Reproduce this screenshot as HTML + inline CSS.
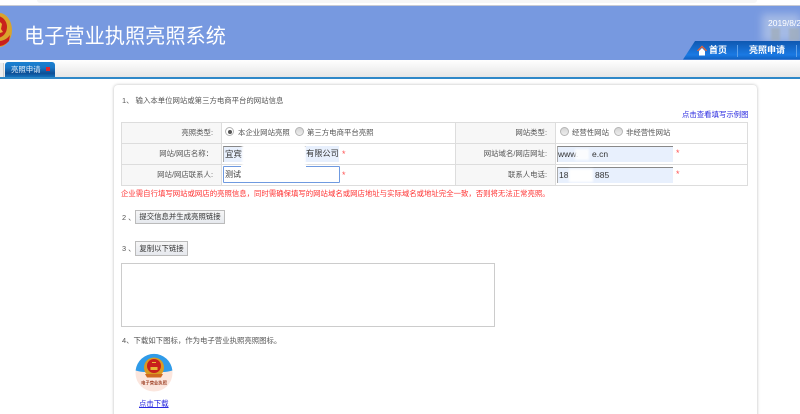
<!DOCTYPE html>
<html lang="zh"><head><meta charset="utf-8"><title>电子营业执照亮照系统</title>
<style>
html,body{margin:0;padding:0;background:#fff;width:800px;height:414px;overflow:hidden}
body{font-family:"Liberation Sans","Noto Sans CJK SC",sans-serif;position:relative;color:#555}
.a{position:absolute;white-space:nowrap}
.t{font-size:7.4px;line-height:12px;filter:blur(.3px)}
.r{text-align:right}
.l{background:#ddd;position:absolute}
.radio{position:absolute;width:7px;height:7px;border-radius:50%;border:1px solid #b5b5b5;background:linear-gradient(#d5d5d5,#eee)}
.radio.on{background:#fff}
.radio.on:after{content:"";position:absolute;left:1.5px;top:1.5px;width:4px;height:4px;border-radius:50%;background:#555}
.inp{position:absolute;box-sizing:border-box;background:#e8f0fd;border-top:1px solid #888;border-left:1px solid #aaa;font-size:8.5px;line-height:15px;color:#333;padding-left:1px;overflow:hidden;white-space:nowrap;filter:blur(.2px)}
.star{position:absolute;color:#f55;font-size:9px;line-height:10px}
.btn{position:absolute;box-sizing:border-box;background:linear-gradient(#f6f6f6,#e6e9ee);border:1px solid #bbb;font-size:7.4px;line-height:12px;text-align:center;color:#333;white-space:nowrap}
.mask{position:absolute;background:#fff;filter:blur(1px)}
</style></head><body>
<div class="a" style="left:37px;top:0;width:720px;height:3px;background:#f6f6f6;border-radius:0 0 4px 4px"></div>
<div class="a" style="left:0;top:5px;width:800px;height:1px;background:#c8cbd4"></div>
<div class="a" style="left:0;top:6px;width:800px;height:54px;background:#7799e0"></div>
<div class="a" style="left:762px;top:14px;width:38px;height:28px;background:#b8c8e8;filter:blur(4px);opacity:.7"></div>
<div class="a" style="left:771px;top:28px;width:9px;height:13px;background:#a0adba;filter:blur(1px);opacity:.75"></div>
<div class="a" style="left:789px;top:28px;width:11px;height:13px;background:#a0adba;filter:blur(1px);opacity:.75"></div>
<svg class="a" style="left:0;top:13px" width="14" height="36" viewBox="0 0 14 36"><ellipse cx="-1" cy="17" rx="13" ry="17" fill="#d9a32c"/><ellipse cx="-3" cy="14" rx="10" ry="11" fill="#c9201c"/><path d="M0 9l2 2-1 5 2 3-3 1z" fill="#e8b838"/><path d="M-1 28c5 0 9-3 11-6l-1 6c-3 3-6 5-10 5z" fill="#c9201c"/></svg>
<div class="a" style="left:24px;top:22px;font-size:20.2px;line-height:30px;color:#fff;filter:blur(.3px)">电子营业执照亮照系统</div>
<div class="a" style="left:768px;top:18px;font-size:8.5px;line-height:11px;color:#fff">2019/8/2</div>
<svg class="a" style="left:682px;top:40px" width="118" height="20"><defs><linearGradient id="g" x1="0" y1="0" x2="0" y2="1"><stop offset="0" stop-color="#0f58b0"/><stop offset=".75" stop-color="#1a7ae4"/><stop offset="1" stop-color="#0f60c0"/></linearGradient></defs><path d="M1 19.500L13 1H118V19.500Z" fill="url(#g)"/><rect x="55" y="5" width="1" height="12" fill="#5fa0e8"/><rect x="114" y="5" width="1" height="12" fill="#5fa0e8"/><path d="M15 10.500l5-5 5 5-1 .8-4-4-4 4z" fill="#f0602a"/><path d="M17 11l3-3 3 3v4.500h-6z" fill="#fff"/></svg>
<div class="a" style="left:709px;top:44px;font-size:9px;line-height:13px;font-weight:bold;color:#fff">首页</div>
<div class="a" style="left:749px;top:44px;font-size:9px;line-height:13px;font-weight:bold;color:#fff">亮照申请</div>
<div class="a" style="left:0;top:60px;width:800px;height:17px;background:linear-gradient(#fff,#e6e6e6)"></div>
<div class="a" style="left:0;top:63px;width:3px;height:14px;background:#eee;border-right:1px solid #ccc"></div>
<div class="a" style="left:5px;top:62px;width:50px;height:15px;background:linear-gradient(#1a80d0 0,#1a78c8 35%,#0d4f96 75%,#1470bc 100%);border-radius:3px 3px 0 0"></div>
<div class="a" style="left:11px;top:64px;font-size:7.4px;line-height:12px;color:#e6f0fa;filter:blur(.2px)">亮照申请</div>
<div class="a" style="left:46px;top:67px;width:4px;height:4px;background:#e3242b"></div>
<div class="a" style="left:0;top:77px;width:800px;height:2px;background:#2f88c8"></div>
<div class="a" style="left:114px;top:85px;width:643px;height:340px;background:#fff;border-radius:4px 4px 0 0;box-shadow:0 0 3px #bbb"></div>
<div class="a t" style="left:122px;top:95px">1、 输入本单位网站或第三方电商平台的网站信息</div>
<div class="a t" style="left:682px;top:109px;color:#2a2ae0">点击查看填写示例图</div>
<div class="a" style="left:121px;top:122px;width:627px;height:63px;background:#fff"></div>
<div class="a" style="left:121px;top:123px;width:100px;height:62px;background:#f7f7f7"></div>
<div class="a" style="left:455px;top:123px;width:100px;height:62px;background:#f7f7f7"></div>
<div class="l" style="left:121px;top:122px;width:627px;height:1px"></div>
<div class="l" style="left:121px;top:143px;width:627px;height:1px"></div>
<div class="l" style="left:121px;top:164px;width:627px;height:1px"></div>
<div class="l" style="left:121px;top:185px;width:627px;height:1px"></div>
<div class="l" style="left:121px;top:122px;width:1px;height:64px"></div>
<div class="l" style="left:221px;top:122px;width:1px;height:64px"></div>
<div class="l" style="left:455px;top:122px;width:1px;height:64px"></div>
<div class="l" style="left:555px;top:122px;width:1px;height:64px"></div>
<div class="l" style="left:747px;top:122px;width:1px;height:64px"></div>
<div class="a t r" style="left:122px;width:91px;top:127px">亮照类型:</div>
<div class="a t r" style="left:122px;width:91px;top:148px">网站/网店名称：</div>
<div class="a t r" style="left:122px;width:91px;top:169px">网站/网店联系人:</div>
<div class="a t r" style="left:456px;width:91px;top:127px">网站类型:</div>
<div class="a t r" style="left:456px;width:91px;top:148px">网站域名/网店网址:</div>
<div class="a t r" style="left:456px;width:91px;top:169px">联系人电话:</div>
<div class="radio on" style="left:225px;top:127px"></div>
<div class="a t" style="left:238px;top:127px">本企业网站亮照</div>
<div class="radio" style="left:295px;top:127px"></div>
<div class="a t" style="left:307px;top:127px">第三方电商平台亮照</div>
<div class="radio" style="left:560px;top:127px"></div>
<div class="a t" style="left:572px;top:127px">经营性网站</div>
<div class="radio" style="left:614px;top:127px"></div>
<div class="a t" style="left:626px;top:127px">非经营性网站</div>
<div class="inp" style="left:223px;top:146px;width:116px;height:16px">宜宾</div>
<div class="mask" style="left:242px;top:144px;width:64px;height:24px"></div>
<div class="a" style="left:306px;top:146px;width:33px;height:16px;background:#e8f0fd"></div>
<div class="a" style="left:306px;top:148px;font-size:8.2px;line-height:12px;color:#333;filter:blur(.2px)">有限公司</div>
<div class="star" style="left:342px;top:149px">*</div>
<div class="a" style="left:223px;top:166px;width:117px;height:17px;box-sizing:border-box;border:1px solid #6f9ae0;border-radius:1px;background:#fff;font-size:8px;line-height:15px;color:#333;padding-left:1px;clip-path:polygon(0 0,18px 0,18px 3px,83px 3px,83px 0,100% 0,100% 100%,0 100%)">测试</div>
<div class="star" style="left:342px;top:170px">*</div>
<div class="inp" style="left:557px;top:146px;width:116px;height:16px"></div>
<div class="a" style="left:558px;top:148px;font-size:8.5px;line-height:12px;color:#333;filter:blur(.2px)">www.</div>
<div class="a" style="left:592px;top:148px;font-size:8.5px;line-height:12px;color:#333;filter:blur(.2px)">e.cn</div>
<div class="mask" style="left:575px;top:149px;width:14px;height:11px;opacity:.85"></div>
<div class="star" style="left:676px;top:148px">*</div>
<div class="inp" style="left:557px;top:167px;width:116px;height:16px"></div>
<div class="a" style="left:559px;top:169px;font-size:8.5px;line-height:12px;color:#333;filter:blur(.2px)">18</div>
<div class="a" style="left:595px;top:169px;font-size:8.5px;line-height:12px;color:#333;filter:blur(.2px)">885</div>
<div class="mask" style="left:569px;top:169px;width:24px;height:13px"></div>
<div class="star" style="left:676px;top:169px">*</div>
<div class="a t" style="left:121px;top:188px;color:#f33">企业需自行填写网站或网店的亮照信息，同时需确保填写的网站域名或网店地址与实际域名或地址完全一致，否则将无法正常亮照。</div>
<div class="a t" style="left:122px;top:212px">2 、</div>
<div class="btn" style="left:135px;top:210px;width:90px;height:14px"><span style="filter:blur(.3px);display:block">提交信息并生成亮照链接</span></div>
<div class="a t" style="left:122px;top:243px">3 、</div>
<div class="btn" style="left:135px;top:241px;width:53px;height:15px"><span style="filter:blur(.3px);display:block;line-height:13px">复制以下链接</span></div>
<div class="a" style="left:121px;top:263px;width:374px;height:64px;box-sizing:border-box;border:1px solid #ccc;background:#fff"></div>
<div class="a t" style="left:122px;top:335px">4、下载如下图标，作为电子营业执照亮照图标。</div>
<svg class="a" style="left:135px;top:353px" width="38" height="40" viewBox="0 0 38 40"><circle cx="19" cy="20" r="18.500" fill="#fbe6de"/><path d="M.6 17.500A18.500 18.500 0 0 1 37.400 17.500C34 18.500 31 19 29 19H9C7 19 4 18.500 .6 17.500Z" fill="#2f9be8"/><circle cx="19" cy="14.500" r="10" fill="#d99a22"/><circle cx="19" cy="13" r="7" fill="#c8201c"/><path d="M17 9h4v1h-4zM15.500 14h7v3h-7z" fill="#e8b838"/><path d="M10 21h18l-2 3.500H12z" fill="#d06a20"/><text x="19" y="31.500" font-size="4.300" font-weight="bold" text-anchor="middle" fill="#a34a30" font-family="Noto Sans CJK SC,sans-serif">电子营业执照</text></svg>
<div class="a t" style="left:139px;top:398px;color:#2a2ae0;text-decoration:underline">点击下载</div>
</body></html>
